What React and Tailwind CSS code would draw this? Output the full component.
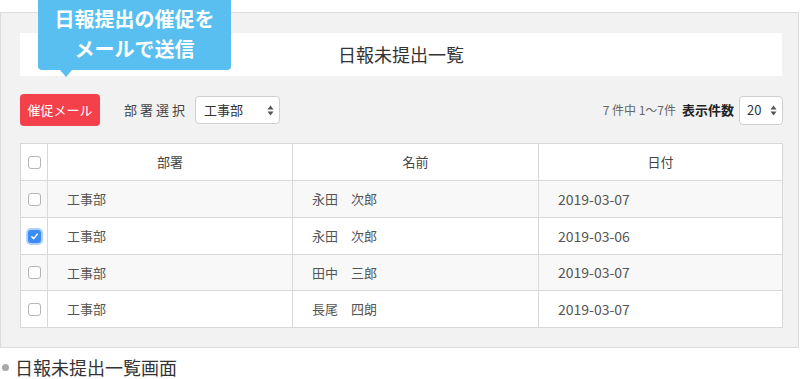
import React from "react";

const FONT = { fontFamily: '"Noto Sans CJK JP", "Noto Sans", sans-serif' };

function Arrows() {
  return (
    <svg width="7" height="11" viewBox="0 0 7 11" className="block">
      <path d="M3.5 0.5 L6.5 4.5 L0.5 4.5 Z" fill="#555" />
      <path d="M3.5 10.5 L6.5 6.5 L0.5 6.5 Z" fill="#555" />
    </svg>
  );
}

function Check({ checked }) {
  if (checked) {
    return (
      <span className="flex h-[13px] w-[13px] items-center justify-center rounded-[3px] bg-[#3d8cf5] shadow-[0_0_0_2px_rgba(80,150,250,0.45)]">
        <svg width="9" height="9" viewBox="0 0 9 9">
          <path d="M1.8 4.8 L3.7 6.6 L7.3 2.2" fill="none" stroke="#fff" strokeWidth="1.5" strokeLinecap="round" strokeLinejoin="round" />
        </svg>
      </span>
    );
  }
  return <span className="block h-[13px] w-[13px] rounded-[3px] border border-[#b5b5b5] bg-white" />;
}

const rows = [
  { dept: "工事部", name: "永田　次郎", date: "2019-03-07", checked: false, h: "h-[37px]" },
  { dept: "工事部", name: "永田　次郎", date: "2019-03-06", checked: true, h: "h-[37px]" },
  { dept: "工事部", name: "田中　三郎", date: "2019-03-07", checked: false, h: "h-[36px]" },
  { dept: "工事部", name: "長尾　四朗", date: "2019-03-07", checked: false, h: "h-[37px]" },
];

export default function App() {
  return (
    <div className="relative h-[379px] w-[800px] overflow-hidden bg-white" style={FONT}>
      <div className="mt-[12px] h-[336px] w-[799px] border border-[#dcdcdc] bg-[#f2f2f2] pl-[19px] pr-[15px] pt-[20px]">
        <div className="flex h-[43px] w-[762px] items-center justify-center bg-white text-[18px] text-[#333]">
          日報未提出一覧
        </div>

        <div className="mt-[18px] flex h-[32px] items-center">
          <div className="flex h-[32px] w-[80px] items-center justify-center rounded-[4px] bg-[#f4404b] text-[13px] text-white">
            催促メール
          </div>
          <div className="ml-[24px] text-[13px] tracking-[3px] text-[#444]">部署選択</div>
          <div className="ml-[7px] flex h-[28px] w-[85px] items-center justify-between rounded-[4px] border border-[#cfcfcf] bg-white pl-[8px] pr-[5px] text-[13px] text-[#333]">
            <span>工事部</span>
            <Arrows />
          </div>
          <div className="ml-auto flex items-center">
            <span className="text-[12px] text-[#666]">7 件中 1〜7件</span>
            <span className="ml-[6px] text-[13px] font-bold text-[#222]">表示件数</span>
            <div className="ml-[5px] flex h-[29px] w-[44px] items-center justify-between rounded-[4px] border border-[#cfcfcf] bg-white pl-[7px] pr-[5px] text-[13px] text-[#333]">
              <span>20</span>
              <Arrows />
            </div>
          </div>
        </div>

        <div className="mt-[17px] w-[763px] border border-[#d8d8d8] bg-white text-[13px]">
          <div className="grid h-[36px] grid-cols-[27px_245px_246px_1fr] text-[#444]">
            <div className="flex items-center justify-center border-r border-[#d8d8d8]">
              <Check checked={false} />
            </div>
            <div className="flex items-center justify-center border-r border-[#d8d8d8]">部署</div>
            <div className="flex items-center justify-center border-r border-[#d8d8d8]">名前</div>
            <div className="flex items-center justify-center">日付</div>
          </div>
          {rows.map((r, i) => (
            <div
              key={i}
              className={
                "grid grid-cols-[27px_245px_246px_1fr] border-t border-[#d8d8d8] text-[#555] " +
                r.h +
                " " +
                (i % 2 === 0 ? "bg-[#f8f8f8]" : "bg-white")
              }
            >
              <div className="flex items-center justify-center border-r border-[#d8d8d8]">
                <Check checked={r.checked} />
              </div>
              <div className="flex items-center border-r border-[#d8d8d8] pl-[19px]">{r.dept}</div>
              <div className="flex items-center border-r border-[#d8d8d8] pl-[19px]">{r.name}</div>
              <div className="flex items-center pl-[19px] text-[14px]">{r.date}</div>
            </div>
          ))}
        </div>
      </div>

      <div className="mt-[7px] flex h-[24px] items-center text-[18px] leading-[24px] text-[#333]">
        <span className="ml-[2px] mr-[6px] block h-[7px] w-[7px] rounded-full bg-[#a8a8a8]" />
        <span>日報未提出一覧画面</span>
      </div>

      <div className="absolute left-[38px] top-0 h-[70px] w-[193px] rounded-b-[4px] bg-[#59bff0] pt-[4px] text-center text-[20px] font-bold leading-[30px] text-white">
        <div>日報提出の催促を</div>
        <div>メールで送信</div>
        <div className="absolute left-[22px] top-[70px] h-0 w-0 border-l-[6px] border-r-[6px] border-t-[7px] border-l-transparent border-r-transparent border-t-[#59bff0]" />
      </div>
    </div>
  );
}
